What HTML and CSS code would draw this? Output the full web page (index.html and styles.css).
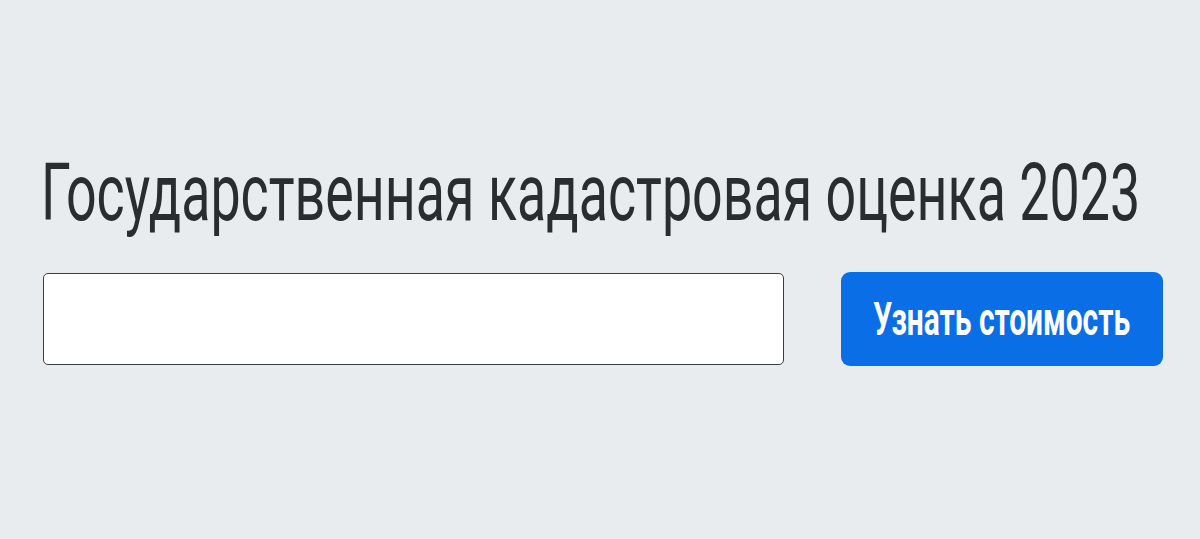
FILE: index.html
```html
<!DOCTYPE html>
<html lang="ru">
<head>
<meta charset="utf-8">
<title>Государственная кадастровая оценка 2023</title>
<link rel="stylesheet" href="styles.css">
</head>
<body>
<main class="page">
  <h1 class="title"><span class="title-text">Государственная кадастровая оценка 2023</span></h1>
  <form class="search">
    <input class="search-input" type="text" aria-label="Кадастровый номер">
    <button class="search-button" type="button"><span class="button-text">Узнать стоимость</span></button>
  </form>
</main>
</body>
</html>
```
FILE: styles.css
```css
html, body {
  margin: 0;
  padding: 0;
}
body {
  background: #e8ecef;
  width: 1200px;
  height: 539px;
  overflow: hidden;
  font-family: Roboto, "Liberation Sans", sans-serif;
}
.page {
  padding: 145px 37px 0 43px;
}
.title {
  margin: 0 0 0 -2px;
  font-weight: 400;
  font-size: 80px;
  line-height: 96px;
  height: 96px;
  width: 1120px;
  overflow: hidden;
  color: #2a2d30;
  white-space: nowrap;
}
.title-text {
  display: inline-block;
  transform: scaleX(0.672);
  transform-origin: left center;
}
.search {
  display: flex;
  align-items: center;
  gap: 57px;
  margin-top: 31px;
}
.search-input {
  box-sizing: border-box;
  width: 741px;
  height: 92px;
  border: 1.5px solid #3a3d40;
  border-radius: 5px;
  background: #fff;
  margin: 0;
  flex: none;
}
.search-button {
  box-sizing: border-box;
  width: 322px;
  height: 94px;
  border: 0;
  border-radius: 9px;
  background: #0a6ee6;
  color: #fff;
  font-family: Roboto, "Liberation Sans", sans-serif;
  font-weight: 700;
  font-size: 46px;
  padding: 0;
  flex: none;
  display: flex;
  align-items: center;
  justify-content: center;
  white-space: nowrap;
  overflow: hidden;
}
.button-text {
  display: inline-block;
  transform: scaleX(0.65);
  transform-origin: center center;
}
```
